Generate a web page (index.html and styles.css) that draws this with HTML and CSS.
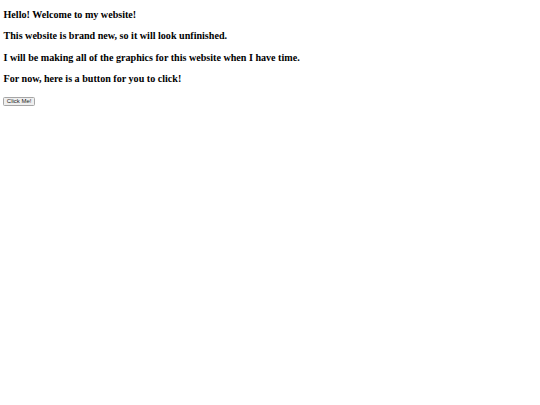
FILE: index.html
```html
<!DOCTYPE html>
<html>
<head>
<meta charset="utf-8">
<link rel="stylesheet" href="styles.css">
</head>
<body class="page">
<h3 class="line">Hello! Welcome to my website!</h3>
<h3 class="line">This website is brand new, so it will look unfinished.</h3>
<h3 class="line">I will be making all of the graphics for this website when I have time.</h3>
<h3 class="line">For now, here is a button for you to click!</h3>
<button class="btn">Click Me!</button>
</body>
</html>
```
FILE: styles.css
```css
html { background: #fff; }
.page {
  margin: 0;
  padding: 8.5px 3.5px;
  display: flex;
  flex-direction: column;
  align-items: flex-start;
  font-family: "Liberation Serif", "Times New Roman", serif;
  color: #000;
}
.line {
  font-size: 10.1px;
  line-height: 11.5px;
  font-weight: bold;
  margin: 0 0 10px;
}
.btn {
  font-family: "Liberation Sans", Arial, sans-serif;
  font-size: 6px;
  line-height: 6.6px;
  padding: 0 2.8px;
  margin: 2.6px 0 0 -0.5px;
  border: 1px solid #a6a6a6;
  border-radius: 1.5px;
  background: #efefef;
  color: #222;
}
```
